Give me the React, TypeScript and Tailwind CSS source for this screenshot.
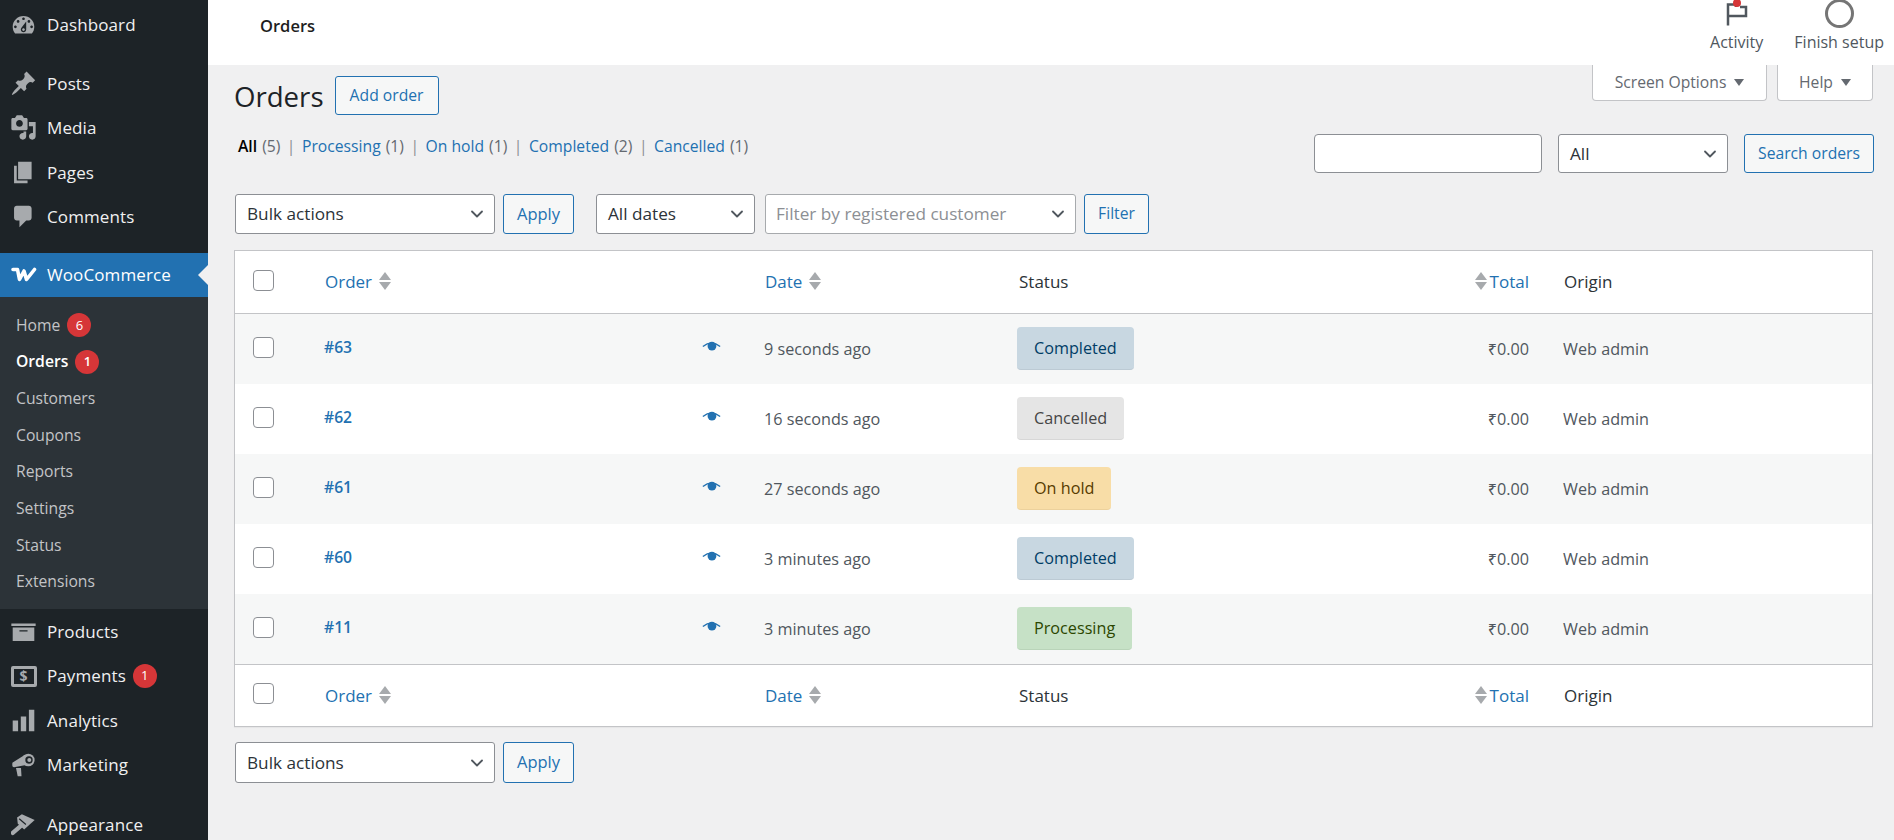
import type { ReactNode } from 'react';
import { ChevronDown } from 'lucide-react';

const FONT = "font-['Open_Sans','Noto_Sans',sans-serif]";

const icons: Record<string, ReactNode> = {
  dashboard: <path d="M3.76 16h12.48c1.1-1.37 1.76-3.11 1.76-5 0-4.42-3.58-8-8-8s-8 3.58-8 8c0 1.89.66 3.63 1.76 5zM10 4c.55 0 1 .45 1 1s-.45 1-1 1-1-.45-1-1 .45-1 1-1zM6 6c.55 0 1 .45 1 1s-.45 1-1 1-1-.45-1-1 .45-1 1-1zm8 0c.55 0 1 .45 1 1s-.45 1-1 1-1-.45-1-1 .45-1 1-1zm-5.37 5.55L12 7v6c0 1.1-.9 2-2 2s-2-.9-2-2c0-.57.24-1.08.63-1.45zM4 10c.55 0 1 .45 1 1s-.45 1-1 1-1-.45-1-1 .45-1 1-1zm12 0c.55 0 1 .45 1 1s-.45 1-1 1-1-.45-1-1 .45-1 1-1zm-5 3c0-.55-.45-1-1-1s-1 .45-1 1 .45 1 1 1 1-.45 1-1z" />,
  posts: <path d="M10.44 3.02l1.82-1.82 6.36 6.35-1.83 1.82c-1.05-.68-2.48-.57-3.41.36l-.75.75c-.92.93-1.04 2.35-.35 3.41l-1.83 1.82-2.41-2.41-2.8 2.79c-.42.42-3.38 2.71-3.8 2.29s1.86-3.39 2.28-3.81l2.79-2.79L4.1 9.36l1.83-1.82c1.05.69 2.48.57 3.4-.36l.75-.75c.93-.92 1.05-2.35.36-3.41z" />,
  media: <path d="M13 11V4c0-.55-.45-1-1-1h-1.67L9 1H5L3.67 3H2c-.55 0-1 .45-1 1v7c0 .55.45 1 1 1h10c.55 0 1-.45 1-1zM7 4.5c1.38 0 2.5 1.12 2.5 2.5S8.38 9.5 7 9.5 4.5 8.38 4.5 7 5.62 4.5 7 4.5zM14 6h5v10.5c0 1.38-1.12 2.5-2.5 2.5S14 17.88 14 16.5s1.12-2.5 2.5-2.5c.17 0 .34.02.5.05V9h-3V6zm-4 8.05V13h2v3.5c0 1.38-1.12 2.5-2.5 2.5S7 17.88 7 16.5 8.12 14 9.5 14c.17 0 .34.02.5.05z" />,
  pages: <path d="M6 15V2h10v13H6zm-1 1h8v2H3V5h2v11z" />,
  comments: <path d="M5 2h9c1.1 0 2 .9 2 2v7c0 1.1-.9 2-2 2h-2l-5 5v-5H5c-1.1 0-2-.9-2-2V4c0-1.1.9-2 2-2z" />,
  products: <path d="M19 4v2H1V4h18zM2 7h16v10H2V7zm11 3V9H7v1h6z" />,
  analytics: <path d="M18 18V2h-4v16h4zm-6 0V7H8v11h4zm-6 0v-8H2v8h4z" />,
};

const MenuIcon = ({ name }: { name: string }) => (
  <svg viewBox="0 0 20 20" className="w-[27px] h-[27px] fill-[#a7aaad]">
    {icons[name]}
  </svg>
);

const MarketingIcon = () => (
  <svg viewBox="0 0 24 24" className="w-[24px] h-[24px] fill-[#a7aaad]">
    <path d="M.3 10.500Q.3 9.300 1.500 9L13 1.700 14 12 2 14.300Q.3 14.300.3 12.500zM4 15h5l.5 8.300H5.700z" />
    <circle cx="16.300" cy="7" r="6.300" />
    <circle cx="17" cy="7" r="3.700" fill="#1d2327" />
    <circle cx="17.300" cy="7" r="2" />
  </svg>
);

const AppearanceIcon = () => (
  <svg viewBox="0 0 26 23" className="w-[25px] h-[22px]">
    <path d="M6.300 3.700L11.300.3 24.700 6.300 13.700 16.300 7 10.300z" fill="#a7aaad" />
    <path d="M8.500 5l7 6" stroke="#1d2327" strokeWidth="1.200" />
    <path d="M9.700 13L1.800 19.800" stroke="#a7aaad" strokeWidth="4.500" strokeLinecap="round" />
  </svg>
);

const WooLogo = () => (
  <svg viewBox="0 0 26 15" className="w-[26px] h-[15px] fill-none stroke-white stroke-[3.6]" strokeLinejoin="round" strokeLinecap="round">
    <path d="M2 2.500h4.500L8.500 12.500 13 4l2.500 8.500L23.500 2.500" />
  </svg>
);

const PaymentsIcon = () => (
  <div className="w-[26px] h-[21px] border-[3px] border-[#a7aaad] flex items-center justify-center rounded-[2px]">
    <span className="text-[#a7aaad] text-[14px] font-bold leading-none">$</span>
  </div>
);

const Badge = ({ n }: { n: number }) => (
  <span className="ml-[7px] w-[24px] h-[24px] rounded-full bg-[#d63638] text-white text-[13px] flex items-center justify-center">
    {n}
  </span>
);

const TopItem = ({ icon, label, badge, className = '' }: { icon: ReactNode; label: string; badge?: number; className?: string }) => (
  <div className={`h-[44.4px] flex items-center text-[17px] tracking-[0.1px] text-[#f0f0f1] ${className}`}>
    <span className="w-[47px] shrink-0 flex justify-center">{icon}</span>
    <span>{label}</span>
    {badge !== undefined && <Badge n={badge} />}
  </div>
);

const subItems: { label: string; badge?: number; current?: boolean }[] = [
  { label: 'Home', badge: 6 },
  { label: 'Orders', badge: 1, current: true },
  { label: 'Customers' },
  { label: 'Coupons' },
  { label: 'Reports' },
  { label: 'Settings' },
  { label: 'Status' },
  { label: 'Extensions' },
];

const Sidebar = () => (
  <aside className="w-[208px] shrink-0 h-[840px] overflow-hidden bg-[#1d2327] pt-[3px]">
    <TopItem icon={<MenuIcon name="dashboard" />} label="Dashboard" />
    <div className="h-[14px]" />
    <TopItem icon={<MenuIcon name="posts" />} label="Posts" />
    <TopItem icon={<MenuIcon name="media" />} label="Media" />
    <TopItem icon={<MenuIcon name="pages" />} label="Pages" />
    <TopItem icon={<MenuIcon name="comments" />} label="Comments" />
    <div className="relative mt-[14px] h-[44px] bg-[#2271b1] flex items-center text-[17px] tracking-[0.1px] text-white">
      <span className="w-[47px] flex justify-center"><WooLogo /></span>
      <span>WooCommerce</span>
      <span className="absolute right-0 top-[12px] border-y-[10px] border-r-[10px] border-y-transparent border-r-[#f0f0f1]" />
    </div>
    <div className="bg-[#2c3338] pt-[10px] pb-[9px] pl-[16px]">
      {subItems.map((s) => (
        <div
          key={s.label}
          className={`h-[36.7px] flex items-center text-[15.7px] ${s.current ? 'font-semibold text-white' : 'text-[#c3c4c7]'}`}
        >
          {s.label}
          {s.badge !== undefined && <Badge n={s.badge} />}
        </div>
      ))}
    </div>
    <TopItem icon={<MenuIcon name="products" />} label="Products" />
    <TopItem icon={<PaymentsIcon />} label="Payments" badge={1} />
    <TopItem icon={<MenuIcon name="analytics" />} label="Analytics" />
    <TopItem icon={<MarketingIcon />} label="Marketing" />
    <TopItem icon={<AppearanceIcon />} label="Appearance" className="mt-[16px]" />
  </aside>
);

const Button = ({ children, className = '' }: { children: ReactNode; className?: string }) => (
  <div className={`flex items-center justify-center border border-[#2271b1] bg-[#f6f7f7] rounded-[3px] text-[#2271b1] text-[15.7px] ${className}`}>
    {children}
  </div>
);

const Select = ({ label, className = '', muted }: { label: string; className?: string; muted?: boolean }) => (
  <div className={`flex items-center justify-between bg-white border rounded-[3px] pr-[7px] text-[17.2px] ${muted ? 'pl-[10px] border-[#a7aaad] text-[#8c8f94]' : 'pl-[11px] border-[#8c8f94] text-[#2c3338]'} ${className}`}>
    <span>{label}</span>
    <ChevronDown size={20} strokeWidth={2.2} className="text-[#50575e]" />
  </div>
);

const SortArrows = () => (
  <span className="inline-flex flex-col gap-[2px] w-[12px] shrink-0 mb-[2px]">
    <span className="border-x-[6px] border-b-[8px] border-x-transparent border-b-[#a7aaad]" />
    <span className="border-x-[6px] border-t-[8px] border-x-transparent border-t-[#a7aaad]" />
  </span>
);

const Checkbox = () => (
  <span className="block ml-[18px] mb-[4px] w-[21px] h-[21px] bg-white border border-[#8c8f94] rounded-[4px]" />
);

const EyeIcon = () => (
  <svg viewBox="0 0 20 12" className="w-[19px] h-[11px] mb-[2px] fill-[#2271b1]">
    <path d="M.6 6Q10-1.500 19.400 6" fill="none" stroke="#2271b1" strokeWidth="1.600" />
    <circle cx="10.500" cy="5.500" r="4.800" />
  </svg>
);

const COLS = 'grid grid-cols-[90px_439px_253px_383px_129px_343px] items-center';

const HeadRow = ({ className }: { className: string }) => (
  <div className={`${COLS} ${className} text-[17px]`}>
    <Checkbox />
    <div className="flex items-center gap-[7px] text-[#2271b1]">Order <SortArrows /></div>
    <div className="flex items-center gap-[7px] text-[#2271b1] pl-[1px]">Date <SortArrows /></div>
    <div className="pl-[2px] text-[#2c3338]">Status</div>
    <div className="flex items-center justify-end gap-[3px] text-[#2271b1]"><SortArrows /> Total</div>
    <div className="pl-[35px] text-[#2c3338]">Origin</div>
  </div>
);

const orders = [
  { id: '#63', date: '9 seconds ago', status: 'Completed', badge: 'bg-[#c8d7e1] text-[#003d66] border-[#bccad4]' },
  { id: '#62', date: '16 seconds ago', status: 'Cancelled', badge: 'bg-[#e5e5e5] text-[#454545] border-[#d7d7d7]' },
  { id: '#61', date: '27 seconds ago', status: 'On hold', badge: 'bg-[#f8dda7] text-[#573b00] border-[#ecd19c]' },
  { id: '#60', date: '3 minutes ago', status: 'Completed', badge: 'bg-[#c8d7e1] text-[#003d66] border-[#bccad4]' },
  { id: '#11', date: '3 minutes ago', status: 'Processing', badge: 'bg-[#c6e1c6] text-[#2c4700] border-[#b9d4b9]' },
];

const OrdersTable = () => (
  <div className="mt-[16px] mr-[21px] ml-[26px] border border-[#c3c4c7] bg-white shadow-[0_1px_1px_rgba(0,0,0,0.04)]">
    <HeadRow className="h-[63px] border-b border-[#c3c4c7]" />
    {orders.map((o, i) => (
      <div key={o.id} className={`${COLS} h-[70px] text-[16.2px] ${i % 2 === 0 ? 'bg-[#f6f7f7]' : 'bg-white'}`}>
        <Checkbox />
        <div className="flex items-center justify-between -ml-[1px] pr-[43px] text-[15.7px] mb-[2px] text-[#2271b1] font-semibold">
          {o.id}
          <EyeIcon />
        </div>
        <div className="text-[#50575e]">{o.date}</div>
        <div>
          <span className={`inline-flex items-center h-[43px] mb-[2px] pt-[2px] px-[17px] rounded-[4px] border-b ${o.badge}`}>{o.status}</span>
        </div>
        <div className="text-right text-[#50575e]">₹0.00</div>
        <div className="pl-[34px] text-[#50575e]">Web admin</div>
      </div>
    ))}
    <HeadRow className="h-[62px] border-t border-[#c3c4c7]" />
  </div>
);

const statusLinks = [
  { label: 'Processing', n: 1 },
  { label: 'On hold', n: 1 },
  { label: 'Completed', n: 2 },
  { label: 'Cancelled', n: 1 },
];

export default function App() {
  return (
    <div className={`flex h-[840px] overflow-hidden bg-[#f0f0f1] ${FONT}`}>
      <Sidebar />
      <main className="flex-1 min-w-0">
        <header className="h-[65px] bg-white flex justify-between pl-[52px] pr-[10px]">
          <div className="pt-[14px] text-[16.5px] font-semibold text-[#1e1e1e]">Orders</div>
          <div className="flex gap-[31px] text-[16px] text-[#50575e]">
            <div className="flex flex-col items-center">
              <div className="relative h-[26px] mb-[4px]">
                <svg viewBox="0 0 22 26" className="w-[22px] h-[26px] fill-none stroke-[#50575e] stroke-[2.500]">
                  <path d="M2 25.500V4.500h8V7M2 16h18V7h-6" />
                </svg>
                <span className="absolute top-[-1px] left-[7px] w-[8px] h-[8px] rounded-full bg-[#d63638]" />
              </div>
              Activity
            </div>
            <div className="flex flex-col items-center">
              <span className="block w-[29px] h-[29px] mt-[-1px] mb-[2px] rounded-full border-[3px] border-[#757575]" />
              Finish setup
            </div>
          </div>
        </header>

        <div className="flex justify-between items-start h-[50px] pl-[26px] pr-[21px]">
          <div className="flex items-center pt-[11px] gap-[11px]">
            <h1 className="text-[27.6px] text-[#1d2327] leading-[38px]">Orders</h1>
            <Button className="w-[104px] h-[39px]">Add order</Button>
          </div>
          <div className="flex gap-[10px]">
            <div className="w-[175px] h-[36px] bg-white border border-t-0 border-[#c3c4c7] rounded-b-[4px] flex items-center justify-center gap-[8px] text-[15.7px] text-[#646970]">
              Screen Options <span className="border-x-[5px] border-t-[7px] border-x-transparent border-t-[#646970]" />
            </div>
            <div className="w-[96px] h-[36px] bg-white border border-t-0 border-[#c3c4c7] rounded-b-[4px] flex items-center justify-center gap-[8px] text-[15.7px] text-[#646970]">
              Help <span className="border-x-[5px] border-t-[7px] border-x-transparent border-t-[#646970]" />
            </div>
          </div>
        </div>

        <div className="mt-[19px] flex justify-between items-start pl-[30px] pr-[20px]">
          <div className="flex items-center h-[26px] text-[15.7px] text-[#646970]">
            <span className="font-semibold text-black">All</span>
            <span className="ml-[5px]">(5)</span>
            {statusLinks.map((s) => (
              <span key={s.label} className="flex">
                <span className="mx-[6.500px] text-[#8c8f94]">|</span>
                <span className="text-[#2271b1]">{s.label}</span>
                <span className="ml-[5px]">({s.n})</span>
              </span>
            ))}
          </div>
          <div className="flex gap-[16px]">
            <div className="w-[228px] h-[39px] bg-white border border-[#8c8f94] rounded-[4px]" />
            <Select label="All" className="w-[170px] h-[39px]" />
            <Button className="w-[130px] h-[39px]">Search orders</Button>
          </div>
        </div>

        <div className="mt-[21px] flex items-center pl-[27px]">
          <Select label="Bulk actions" className="w-[260px] h-[40px]" />
          <Button className="ml-[8px] w-[71px] h-[40px] text-[16.5px]">Apply</Button>
          <Select label="All dates" className="ml-[22px] w-[159px] h-[40px]" />
          <Select label="Filter by registered customer" muted className="ml-[10px] w-[311px] h-[40px]" />
          <Button className="ml-[8px] w-[65px] h-[40px]">Filter</Button>
        </div>

        <OrdersTable />

        <div className="mt-[15px] flex items-center pl-[27px]">
          <Select label="Bulk actions" className="w-[260px] h-[41px]" />
          <Button className="ml-[8px] w-[71px] h-[41px] text-[16.5px]">Apply</Button>
        </div>
      </main>
    </div>
  );
}
